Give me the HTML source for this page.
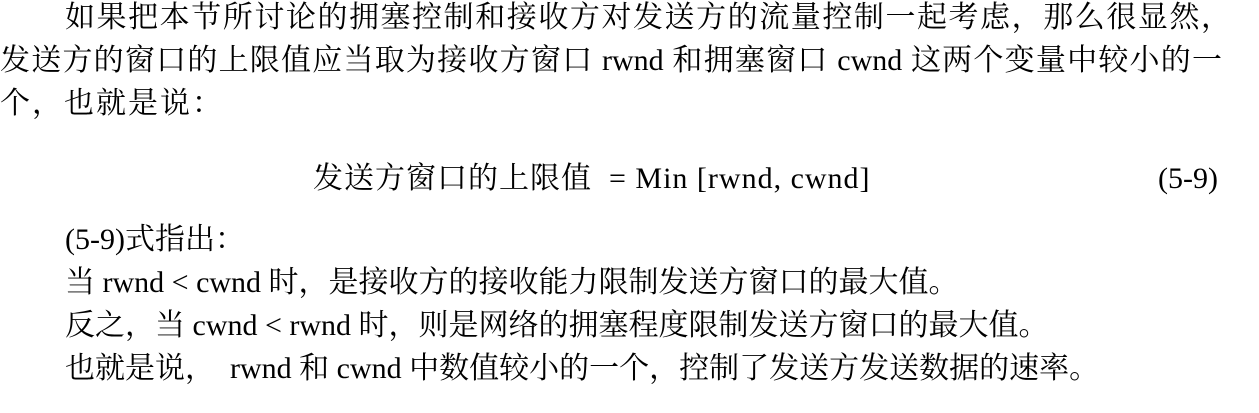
<!DOCTYPE html>
<html><head><meta charset="utf-8"><style>
html,body{margin:0;padding:0;background:#fff;}
body{width:1259px;height:413px;position:relative;overflow:hidden;
font-family:"Liberation Serif","Noto Serif CJK SC",serif;color:#000;font-size:30px;}
.l{position:absolute;white-space:nowrap;line-height:40px;height:40px;}
.j{text-align:justify;text-align-last:justify;white-space:normal;overflow:hidden;}
</style></head><body>
<div class="l j" style="left:65px;top:-2px;width:1166px;">如果把本节所讨论的拥塞控制和接收方对发送方的流量控制一起考虑，那么很显然，</div>
<div class="l j" style="left:0px;top:41px;width:1222px;">发送方的窗口的上限值应当取为接收方窗口 rwnd 和拥塞窗口 cwnd 这两个变量中较小的一</div>
<div class="l" style="left:0px;top:84px;letter-spacing:2px;">个，也就是说：</div>
<div class="l" style="left:313px;top:159px;letter-spacing:1px;">发送方窗口的上限值 &nbsp;= Min [rwnd, cwnd]</div>
<div class="l" style="left:1158px;top:159px;">(5-9)</div>
<div class="l" style="left:65px;top:220px;">(5-9)式指出：</div>
<div class="l" style="left:65px;top:263px;">当 rwnd &lt; cwnd 时，是接收方的接收能力限制发送方窗口的最大值。</div>
<div class="l" style="left:65px;top:306px;">反之，当 cwnd &lt; rwnd 时，则是网络的拥塞程度限制发送方窗口的最大值。</div>
<div class="l" style="left:65px;top:349px;">也就是说， &nbsp;rwnd 和 cwnd 中数值较小的一个，控制了发送方发送数据的速率。</div>
</body></html>
